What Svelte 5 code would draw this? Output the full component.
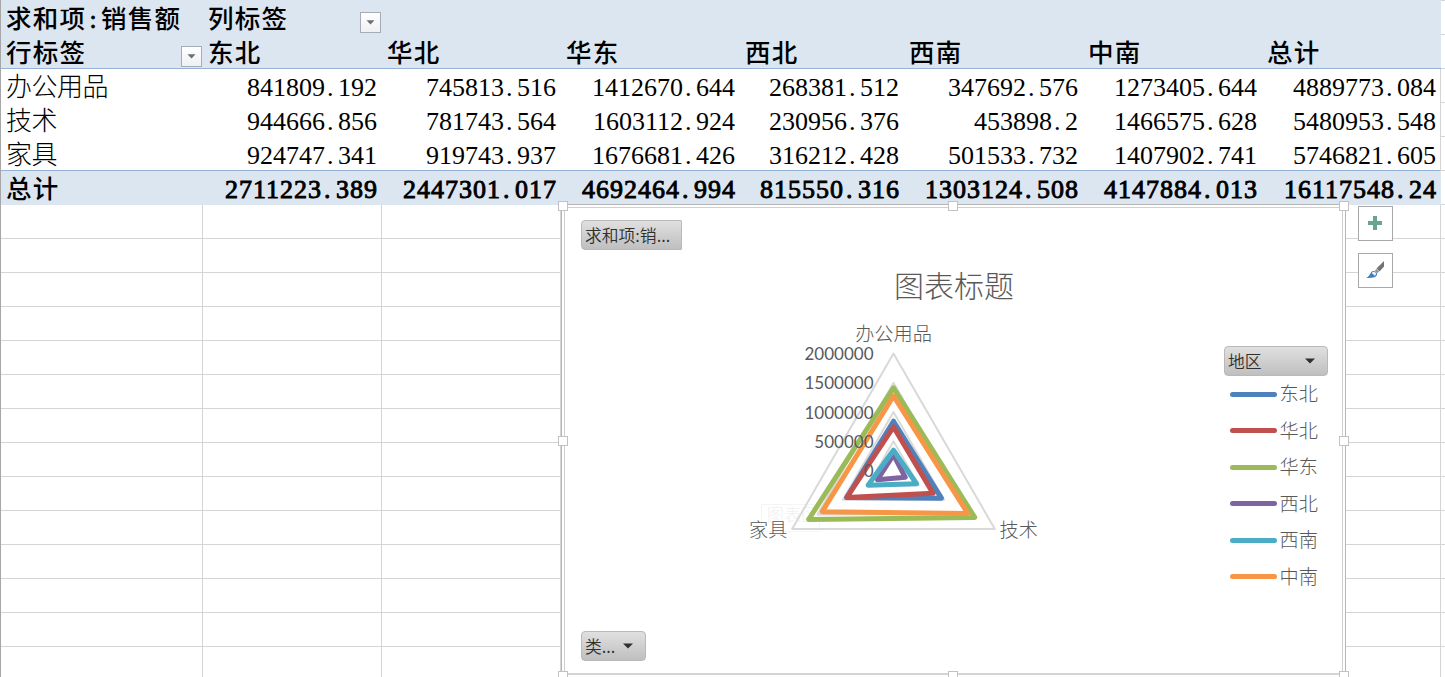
<script>
  const regions = ['东北', '华北', '华东', '西北', '西南', '中南'];
  const rows = [
    { name: '办公用品', values: ['841809.192', '745813.516', '1412670.644', '268381.512', '347692.576', '1273405.644', '4889773.084'] },
    { name: '技术', values: ['944666.856', '781743.564', '1603112.924', '230956.376', '453898.2', '1466575.628', '5480953.548'] },
    { name: '家具', values: ['924747.341', '919743.937', '1676681.426', '316212.428', '501533.732', '1407902.741', '5746821.605'] },
  ];
  const totals = ['2711223.389', '2447301.017', '4692464.994', '815550.316', '1303124.508', '4147884.013', '16117548.24'];
  const colors = ['#4f81bd', '#c0504d', '#9bbb59', '#8064a2', '#4bacc6', '#f79646'];

  // Radar geometry: one axis per category, clockwise from the top.
  const cx = 153.5, cy = 150.5, radius = 117, max = 2000000;
  const ticks = [2000000, 1500000, 1000000, 500000, 0];
  function ring(values) {
    return values
      .map((v, i) => {
        const a = (i * 2 * Math.PI) / 3;
        const r = (v / max) * radius;
        return `${(cx + r * Math.sin(a)).toFixed(2)},${(cy - r * Math.cos(a)).toFixed(2)}`;
      })
      .join(' ');
  }
  const series = regions.map((_, i) => ({ color: colors[i], points: ring(rows.map((r) => +r.values[i])) }));
  const blankRows = Array.from({ length: 14 });
  const handles = ['tl', 'tc', 'tr', 'ml', 'mr', 'bl', 'bc', 'br'];
</script>

{#snippet num(value)}
  {@const p = value.split('.')}
  <div class="cell num">{p[0]}<span class="dot">.</span>{p[1]}</div>
{/snippet}

{#snippet filter()}
  <span class="filter"><svg width="9" height="5" viewBox="0 0 9 5"><path d="M0.5 0.3H8.5L4.5 4.5Z" fill="#6b6f75" /></svg></span>
{/snippet}

{#snippet arrow()}
  <svg width="10" height="6" viewBox="0 0 10 6"><path d="M0 0.4H10L5 5.6Z" fill="#2f2f2f" /></svg>
{/snippet}

<div class="sheet">
  <div class="pivot">
    <div class="row head first">
      <div class="cell">求和项<span class="colon">:</span>销售额</div>
      <div class="cell with-filter">列标签{@render filter()}</div>
      <div class="cell rest"></div>
      <div class="edge"></div>
    </div>
    <div class="row head ruled">
      <div class="cell with-filter">行标签{@render filter()}</div>
      {#each regions as r}<div class="cell">{r}</div>{/each}
      <div class="cell">总计</div>
      <div class="edge"></div>
    </div>
    {#each rows as row, i}
      <div class="row body" class:ruled={i === 2}>
        <div class="cell">{row.name}</div>
        {#each row.values as v}{@render num(v)}{/each}
        <div class="edge"></div>
      </div>
    {/each}
    <div class="row head total">
      <div class="cell">总计</div>
      {#each totals as v}{@render num(v)}{/each}
      <div class="edge"></div>
    </div>
    {#each blankRows as _}
      <div class="row blank">
        {#each Array.from({ length: 9 }) as _}<div></div>{/each}
      </div>
    {/each}
  </div>

  <div class="chart">
    <div class="area">
      <div class="top"><span class="btn value">求和项:销...</span></div>
      <div class="title">图表标题</div>
      <div class="middle">
        <svg class="plot" width="310" height="230" viewBox="0 0 310 230">
          <g class="ghost">
            <rect x="21.5" y="184.5" width="58" height="27" />
            <text x="27" y="201">图表区</text>
          </g>
          {#each ticks.slice(0, 4) as t}
            <polygon points={ring([t, t, t])} fill="none" stroke="#d9d9d9" stroke-width="2" stroke-linejoin="round" />
          {/each}
          {#each series as s}
            <polygon points={s.points} fill="none" stroke={s.color} stroke-width="5" stroke-linejoin="round" />
          {/each}
          {#each ticks as t}
            <text class="tick" x="133.5" y={150 - (t / max) * radius + 7} text-anchor="end">{t}</text>
          {/each}
          <text class="cat" x="153.5" y="21" text-anchor="middle">办公用品</text>
          <text class="cat" x="259.5" y="217">技术</text>
          <text class="cat" x="9" y="217">家具</text>
        </svg>
        <div class="legend">
          <span class="btn region">地区{@render arrow()}</span>
          {#each regions as r, i}
            <div class="item"><i style:background={colors[i]}></i><span>{r}</span></div>
          {/each}
        </div>
      </div>
      <div class="bottom"><span class="btn kind">类...{@render arrow()}</span></div>
    </div>
    {#each handles as h}<span class="handle {h}"></span>{/each}
    <div class="tools">
      <span><svg width="14" height="14" viewBox="0 0 14 14"><path d="M5 0h4v5h5v4H9v5H5V9H0V5h5Z" fill="#68a490" /></svg></span>
      <span>
        <svg width="18" height="18" viewBox="0 0 18 18">
          <path d="M18 0v5.5L13.5 10.500 10.500 7.500Z" fill="#737373" />
          <path d="M10.300 8 13 10.800 11.500 12 9 9.500Z" fill="#8b8b8b" />
          <path d="M0 17C3 16 3.500 14 5 11.500 7 9 11 10 11 13 11 16 8 17 0 17Z" fill="#417cb9" />
          <path d="M6 11.500C7.500 10 10.500 11 10 13.500 9 15.500 7.500 14.500 7.500 13 7 13.500 6 13 6 11.500Z" fill="#eaf3fb" />
        </svg>
      </span>
    </div>
  </div>
</div>

<style>
  :global(body) { background: #fff; overflow: hidden; }
  .sheet {
    position: relative;
    width: 1445px;
    height: 677px;
    overflow: hidden;
    box-sizing: border-box;
    border-left: 1px solid #a6a6a6;
    font-family: 'Liberation Serif', 'Noto Sans CJK SC', serif;
    font-size: 26px;
    color: #000;
  }
  .row {
    display: grid;
    grid-template-columns: 202px 179px 179px 179px 164px 179px 179px 179px 4px;
    height: 34px;
    box-sizing: border-box;
  }
  .first { height: 35px; padding-top: 1px; background: #dce6f1; }
  .cell {
    box-sizing: border-box;
    height: 34px;
    padding: 2px 4px 0 5px;
    line-height: 34px;
    white-space: nowrap;
    font-weight: 300;
    letter-spacing: -0.5px;
  }
  .head .cell { background: #dce6f1; font-weight: 500; font-size: 25.500px; letter-spacing: 1.2px; }
  .colon { display: inline-block; width: 15px; text-align: center; -webkit-text-stroke: 0.8px #000; }
  .first .rest { grid-column: 3 / 9; }
  .ruled .cell { border-bottom: 1px solid #95b3d7; }
  .cell.num { text-align: right; letter-spacing: 0; padding: 2px 5px 0 0; }
  .total .cell.num { font-size: 26px; font-weight: 400; letter-spacing: 1px; padding-right: 4px; -webkit-text-stroke: 0.9px #000; }
  .dot { display: inline-block; width: 13px; padding-left: 2px; box-sizing: border-box; text-align: left; }
  .total .dot { width: 14px; }
  .edge { border-bottom: 1px solid #d4d4d4; border-left: 1px solid #d4d4d4; margin-left: -1px; background: #fff; }
  .head .edge { border-left: 0; margin-left: 0; }
  .first .edge { margin-top: -1px; border-top: 1px solid #d4d4d4; }
  .with-filter { display: flex; justify-content: space-between; padding-right: 1px; }
  .filter {
    display: flex;
    align-items: center;
    justify-content: center;
    width: 21px;
    height: 21px;
    box-sizing: border-box;
    margin-top: 9px;
    border: 1px solid #a5acb5;
    background: linear-gradient(#fff, #eef0f4);
  }
  .blank div { border-right: 1px solid #d4d4d4; border-bottom: 1px solid #d4d4d4; }
  .blank div:last-child { border-right: 0; }

  /* Chart object floating over the sheet */
  .chart {
    position: absolute;
    left: 560px;
    top: 204px;
    width: 785px;
    height: 473px;
    box-sizing: border-box;
    background: #fff;
    border: 1px solid #b5b5b5;
    border-bottom: 0;
    padding: 2px;
  }
  .area {
    height: 468px;
    box-sizing: border-box;
    border: 1px solid #cfcfcf;
    border-bottom: 2px solid #d4d4d4;
    display: flex;
    flex-direction: column;
  }
  .top { height: 42px; padding: 12px 0 0 16px; box-sizing: border-box; display: flex; }
  .btn {
    display: flex;
    align-items: center;
    justify-content: space-between;
    box-sizing: border-box;
    height: 30px;
    padding: 0 12px 0 3px;
    border: 1px solid #b9b9b9;
    border-radius: 4px;
    background: linear-gradient(#e0e0e0, #bfbfbf);
    color: #2f2f2f;
    font: 350 16.800px/27px 'Noto Sans CJK SC', sans-serif;
    white-space: nowrap;
  }
  .btn.value { width: 101px; border-top-right-radius: 1px; border-bottom-right-radius: 1px; }
  .btn.region { width: 104px; }
  .btn.kind { width: 65px; }
  .title { height: 70px; padding-left: 329px; font-size: 30px; line-height: 74px; font-weight: 300; color: #595959; }
  .middle { display: flex; justify-content: space-between; padding-left: 175px; padding-right: 14px; height: 290px; }
  .plot { display: block; overflow: visible; }
  .tick { font: 17px Lato, sans-serif; fill: #595959; }
  .cat { font: 300 19.200px 'Noto Sans CJK SC', sans-serif; fill: #595959; }
  .ghost rect { fill: none; stroke: #f5f5f5; }
  .ghost text { font: 300 17px 'Noto Sans CJK SC', sans-serif; fill: #f0f0f0; }
  .legend { width: 104px; padding-top: 26px; font-size: 19.200px; font-weight: 300; color: #595959; }
  .item { display: flex; align-items: center; gap: 2.500px; height: 36.500px; padding-left: 6px; }
  .item i { width: 47px; height: 5px; border-radius: 3px; }
  .item span { padding-bottom: 2px; }
  .bottom { padding: 21px 0 0 16px; }

  .handle { position: absolute; width: 10px; height: 10px; box-sizing: border-box; border: 1px solid #c2c2c2; background: #fff; }
  .tl, .ml, .bl { left: -4px; }
  .tc, .bc { left: 386px; }
  .tr, .mr, .br { left: 777px; }
  .tl, .tc, .tr { top: -4px; }
  .ml, .mr { top: 231px; }
  .bl, .bc, .br { top: 466px; }
  .tools { position: absolute; left: 796px; top: 1px; display: flex; flex-direction: column; gap: 12px; }
  .tools span {
    display: flex;
    align-items: center;
    justify-content: center;
    width: 35px;
    height: 35px;
    box-sizing: border-box;
    padding: 0 1px 1px 0;
    border: 1px solid #a8a8a8;
    background: #fff;
  }
</style>
